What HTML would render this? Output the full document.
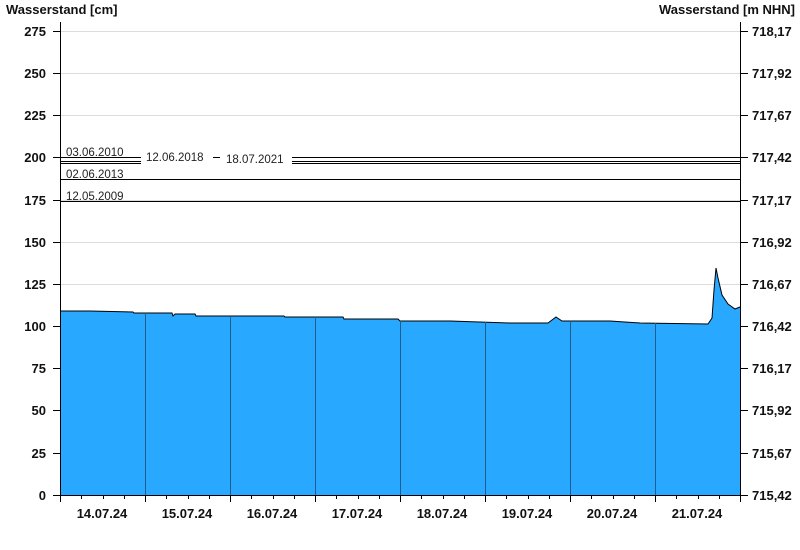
<!DOCTYPE html>
<html><head><meta charset="utf-8"><style>
html,body{margin:0;padding:0;background:#fff;width:800px;height:550px;overflow:hidden}
svg text{font-family:"Liberation Sans",Arial,sans-serif}
</style></head><body>
<svg width="800" height="550" xmlns="http://www.w3.org/2000/svg">
<g stroke="#dcdcdc" stroke-width="1">
<line x1="60" y1="31.5" x2="740" y2="31.5"/>
<line x1="60" y1="73.5" x2="740" y2="73.5"/>
<line x1="60" y1="115.5" x2="740" y2="115.5"/>
<line x1="60" y1="157.5" x2="740" y2="157.5"/>
<line x1="60" y1="200.5" x2="740" y2="200.5"/>
<line x1="60" y1="242.5" x2="740" y2="242.5"/>
<line x1="60" y1="284.5" x2="740" y2="284.5"/>
</g>
<path d="M60,311 L90,311 L133,312 L134,313 L172,313 L173,316 L175,314 L195,314 L196,316 L284,316 L285,317 L343,317 L344,319 L398,319 L400,321 L450,321 L510,323 L548,323 L556,317 L562,321 L610,321 L640,323 L708,324 L712,318 L714,290 L716,268 L718,278 L722,295 L728,304 L735,309 L740,307 L740,495 L60,495 Z" fill="#29a8ff" stroke="none"/>
<path d="M60,311 L90,311 L133,312 L134,313 L172,313 L173,316 L175,314 L195,314 L196,316 L284,316 L285,317 L343,317 L344,319 L398,319 L400,321 L450,321 L510,323 L548,323 L556,317 L562,321 L610,321 L640,323 L708,324 L712,318 L714,290 L716,268 L718,278 L722,295 L728,304 L735,309 L740,307" fill="none" stroke="#000" stroke-width="1"/>
<g stroke="#1f5d8c" stroke-width="1">
<line x1="145.5" y1="313" x2="145.5" y2="495"/>
<line x1="230.5" y1="316" x2="230.5" y2="495"/>
<line x1="315.5" y1="317" x2="315.5" y2="495"/>
<line x1="400.5" y1="321" x2="400.5" y2="495"/>
<line x1="485.5" y1="322" x2="485.5" y2="495"/>
<line x1="570.5" y1="321" x2="570.5" y2="495"/>
<line x1="655.5" y1="323" x2="655.5" y2="495"/>
</g>
<g stroke="#000" stroke-width="1">
<line x1="60" y1="157.5" x2="740" y2="157.5"/>
<line x1="60" y1="161.5" x2="740" y2="161.5"/>
<line x1="60" y1="163.5" x2="740" y2="163.5"/>
<line x1="60" y1="179.5" x2="740" y2="179.5"/>
<line x1="60" y1="201.5" x2="740" y2="201.5"/>
</g>
<rect x="141" y="150" width="72" height="16" fill="#fff"/>
<rect x="213" y="159" width="7" height="7" fill="#fff"/>
<rect x="220" y="150" width="72" height="16" fill="#fff"/>
<g font-size="11.5" fill="#222">
<text x="66" y="156">03.06.2010</text>
<text x="146" y="161">12.06.2018</text>
<text x="226" y="163">18.07.2021</text>
<text x="66" y="178">02.06.2013</text>
<text x="66" y="200">12.05.2009</text>
</g>
<g stroke="#000" stroke-width="1">
<line x1="60.5" y1="22" x2="60.5" y2="502"/>
<line x1="740.5" y1="22" x2="740.5" y2="502"/>
<line x1="60" y1="495.5" x2="741" y2="495.5"/>
</g>
<g stroke="#000" stroke-width="1">
<line x1="53" y1="31.5" x2="60" y2="31.5"/><line x1="53" y1="73.5" x2="60" y2="73.5"/><line x1="53" y1="115.5" x2="60" y2="115.5"/><line x1="53" y1="157.5" x2="60" y2="157.5"/><line x1="53" y1="200.5" x2="60" y2="200.5"/><line x1="53" y1="242.5" x2="60" y2="242.5"/><line x1="53" y1="284.5" x2="60" y2="284.5"/><line x1="53" y1="326.5" x2="60" y2="326.5"/><line x1="53" y1="368.5" x2="60" y2="368.5"/><line x1="53" y1="410.5" x2="60" y2="410.5"/><line x1="53" y1="453.5" x2="60" y2="453.5"/><line x1="53" y1="495.5" x2="60" y2="495.5"/>
<line x1="741" y1="31.5" x2="748" y2="31.5"/><line x1="741" y1="73.5" x2="748" y2="73.5"/><line x1="741" y1="115.5" x2="748" y2="115.5"/><line x1="741" y1="157.5" x2="748" y2="157.5"/><line x1="741" y1="200.5" x2="748" y2="200.5"/><line x1="741" y1="242.5" x2="748" y2="242.5"/><line x1="741" y1="284.5" x2="748" y2="284.5"/><line x1="741" y1="326.5" x2="748" y2="326.5"/><line x1="741" y1="368.5" x2="748" y2="368.5"/><line x1="741" y1="410.5" x2="748" y2="410.5"/><line x1="741" y1="453.5" x2="748" y2="453.5"/><line x1="741" y1="495.5" x2="748" y2="495.5"/>
</g>
<g stroke="#000" stroke-width="1">
<path d="M60.5,495V502M145.5,495V502M230.5,495V502M315.5,495V502M400.5,495V502M485.5,495V502M570.5,495V502M655.5,495V502M740.5,495V502"/>
<path d="M81.5,495V499M103.5,495V499M124.5,495V499M166.5,495V499M188.5,495V499M209.5,495V499M251.5,495V499M273.5,495V499M294.5,495V499M336.5,495V499M358.5,495V499M379.5,495V499M421.5,495V499M443.5,495V499M464.5,495V499M506.5,495V499M528.5,495V499M549.5,495V499M591.5,495V499M613.5,495V499M634.5,495V499M676.5,495V499M698.5,495V499M719.5,495V499"/>
</g>
<g font-size="13" font-weight="bold" fill="#111">
<text x="6" y="14">Wasserstand [cm]</text>
<text x="795" y="14" text-anchor="end">Wasserstand [m NHN]</text>
<g text-anchor="end">
<text x="46" y="36">275</text><text x="46" y="78">250</text><text x="46" y="120">225</text><text x="46" y="162">200</text><text x="46" y="205">175</text><text x="46" y="247">150</text><text x="46" y="289">125</text><text x="46" y="331">100</text><text x="46" y="373">75</text><text x="46" y="415">50</text><text x="46" y="458">25</text><text x="46" y="500">0</text>
</g>
<g>
<text x="752" y="36">718,17</text><text x="752" y="78">717,92</text><text x="752" y="120">717,67</text><text x="752" y="162">717,42</text><text x="752" y="205">717,17</text><text x="752" y="247">716,92</text><text x="752" y="289">716,67</text><text x="752" y="331">716,42</text><text x="752" y="373">716,17</text><text x="752" y="415">715,92</text><text x="752" y="458">715,67</text><text x="752" y="500">715,42</text>
</g>
<g text-anchor="middle">
<text x="102" y="518">14.07.24</text><text x="187" y="518">15.07.24</text><text x="272" y="518">16.07.24</text><text x="357" y="518">17.07.24</text><text x="442" y="518">18.07.24</text><text x="527" y="518">19.07.24</text><text x="612" y="518">20.07.24</text><text x="697" y="518">21.07.24</text>
</g>
</g>
</svg>
</body></html>
